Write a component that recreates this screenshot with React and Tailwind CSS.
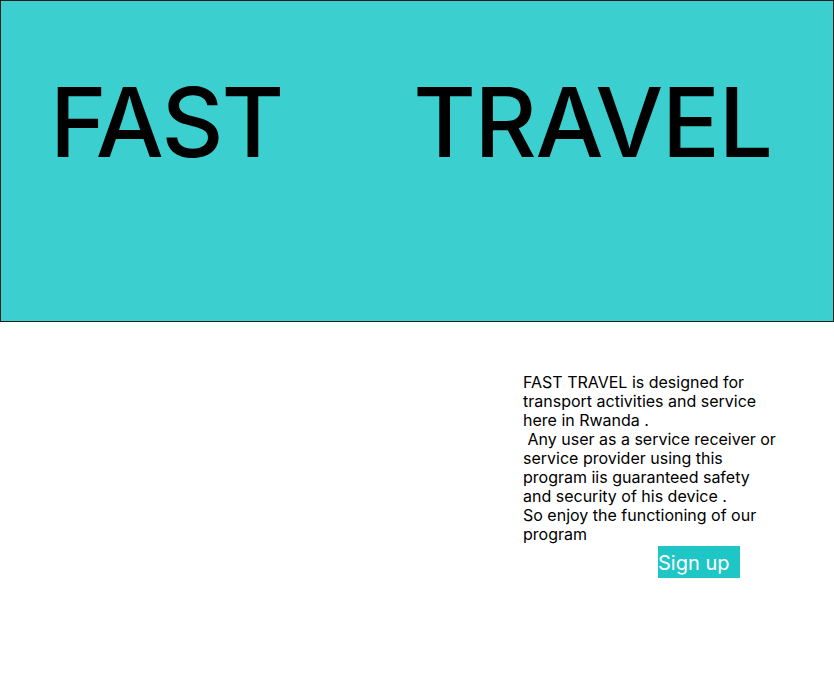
export default function App() {
  return (
    <div className="w-[834px] h-[684px] bg-white" style={{ fontFamily: "Inter, 'Noto Sans', sans-serif" }}>
      <header className="h-[322px] bg-[#3bcfcf] border border-[#1e1e1e] pl-[49px] pt-[61px]">
        <div className="flex text-black text-[96px] leading-[120px] font-medium">
          <span className="tracking-[-2px]">FAST</span>
          <span className="ml-[131px] tracking-[-1.3px]">TRAVEL</span>
        </div>
      </header>
      <main className="pl-[523px] pt-[51px]">
        <p className="w-[260px] text-[16px] leading-[19px] text-black whitespace-pre-line">
          {"FAST TRAVEL is designed for\ntransport activities and service\nhere in Rwanda .\n\u00a0Any user as a service receiver or\nservice provider using this\nprogram iis guaranteed safety\nand security of his device .\nSo enjoy the functioning of our\nprogram"}
        </p>
        <button className="block mt-[2px] ml-[135px] w-[82px] h-[32px] bg-[#1fc6c6] text-white text-[20px] leading-[34px] text-left pl-0">
          Sign up
        </button>
      </main>
    </div>
  );
}
